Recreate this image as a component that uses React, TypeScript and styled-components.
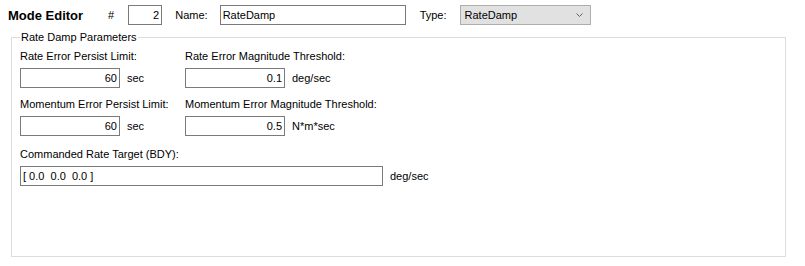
import styled, { createGlobalStyle } from 'styled-components';

const GlobalStyle = createGlobalStyle`
  body {
    margin: 0;
    background: #ffffff;
    font-family: 'Liberation Sans', Arial, sans-serif;
    font-size: 11px;
    color: #000000;
  }
`;

type FieldProps = {
  label: string;
  value: string;
  unit: string;
  width?: number;
  left?: boolean;
};

const Field = ({ label, value, unit, width = 100, left = false }: FieldProps) => {
  return (
    <FieldStyle $wide={width > 100}>
      <span className='field-label'>{label}</span>
      <div className='field-row'>
        <TextBox $width={width} $left={left} defaultValue={value} />
        <Unit>{unit}</Unit>
      </div>
    </FieldStyle>
  );
};

const App = () => {
  return (
    <>
      <GlobalStyle />
      <Page>
        <Header>
          <Title>Mode Editor</Title>
          <Caption $gap={25}>#</Caption>
          <TextBox $width={34} $gap={14} defaultValue='2' />
          <Caption $gap={13}>Name:</Caption>
          <TextBox $width={186} $gap={12} $left defaultValue='RateDamp' />
          <Caption $gap={14}>Type:</Caption>
          <Combo>
            <span>RateDamp</span>
            <svg width='7' height='4' viewBox='0 0 7 4'>
              <path d='M0.5 0.5 L3.5 3.5 L6.5 0.5' fill='none' stroke='#606060' strokeWidth='1' />
            </svg>
          </Combo>
        </Header>
        <Group>
          <legend>Rate Damp Parameters</legend>
          <FieldRow $top={6}>
            <Field label='Rate Error Persist Limit:' value='60' unit='sec' />
            <Field label='Rate Error Magnitude Threshold:' value='0.1' unit='deg/sec' />
          </FieldRow>
          <FieldRow $top={10}>
            <Field label='Momentum Error Persist Limit:' value='60' unit='sec' />
            <Field label='Momentum Error Magnitude Threshold:' value='0.5' unit='N*m*sec' />
          </FieldRow>
          <FieldRow $top={12}>
            <Field
              label='Commanded Rate Target (BDY):'
              value='[ 0.0  0.0  0.0 ]'
              unit='deg/sec'
              width={363}
              left
            />
          </FieldRow>
        </Group>
      </Page>
    </>
  );
};

export default App;

const Page = styled.div`
  width: 805px;
  height: 266px;
  overflow: hidden;
`;

const Header = styled.div`
  display: flex;
  align-items: center;
  height: 20px;
  padding: 5px 0 0 8px;
`;

const Title = styled.span`
  font-size: 13px;
  font-weight: bold;
`;

const Caption = styled.span<{ $gap: number }>`
  margin-left: ${({ $gap }) => $gap}px;
`;

const TextBox = styled.input<{ $width: number; $gap?: number; $left?: boolean }>`
  box-sizing: border-box;
  width: ${({ $width }) => $width}px;
  height: 20px;
  margin: 0 0 0 ${({ $gap }) => $gap ?? 0}px;
  padding: 0 2px;
  border: 1px solid #7a7a7a;
  background: #ffffff;
  font-family: 'Liberation Sans', Arial, sans-serif;
  font-size: 11px;
  color: #000000;
  text-align: ${({ $left }) => ($left ? 'left' : 'right')};
  outline: none;
`;

const Combo = styled.div`
  box-sizing: border-box;
  display: flex;
  align-items: center;
  justify-content: space-between;
  width: 131px;
  height: 20px;
  margin-left: 13px;
  padding: 0 7px 0 4px;
  background: #e1e1e1;
  border: 1px solid #adadad;
`;

const Group = styled.fieldset`
  box-sizing: border-box;
  width: 775px;
  height: 226px;
  margin: 6px 0 0 11px;
  padding: 0 8px;
  border: 1px solid #dcdcdc;

  legend {
    padding: 0 1px;
    line-height: 13px;
  }
`;

const FieldRow = styled.div<{ $top: number }>`
  display: flex;
  margin-top: ${({ $top }) => $top}px;
`;

const FieldStyle = styled.div<{ $wide: boolean }>`
  width: ${({ $wide }) => ($wide ? 'auto' : '165px')};
  display: flex;
  flex-direction: column;

  .field-label {
    line-height: 13px;
    white-space: nowrap;
  }

  .field-row {
    display: flex;
    align-items: center;
    margin-top: 5px;
  }
`;

const Unit = styled.span`
  margin-left: 7px;
  white-space: nowrap;
`;
